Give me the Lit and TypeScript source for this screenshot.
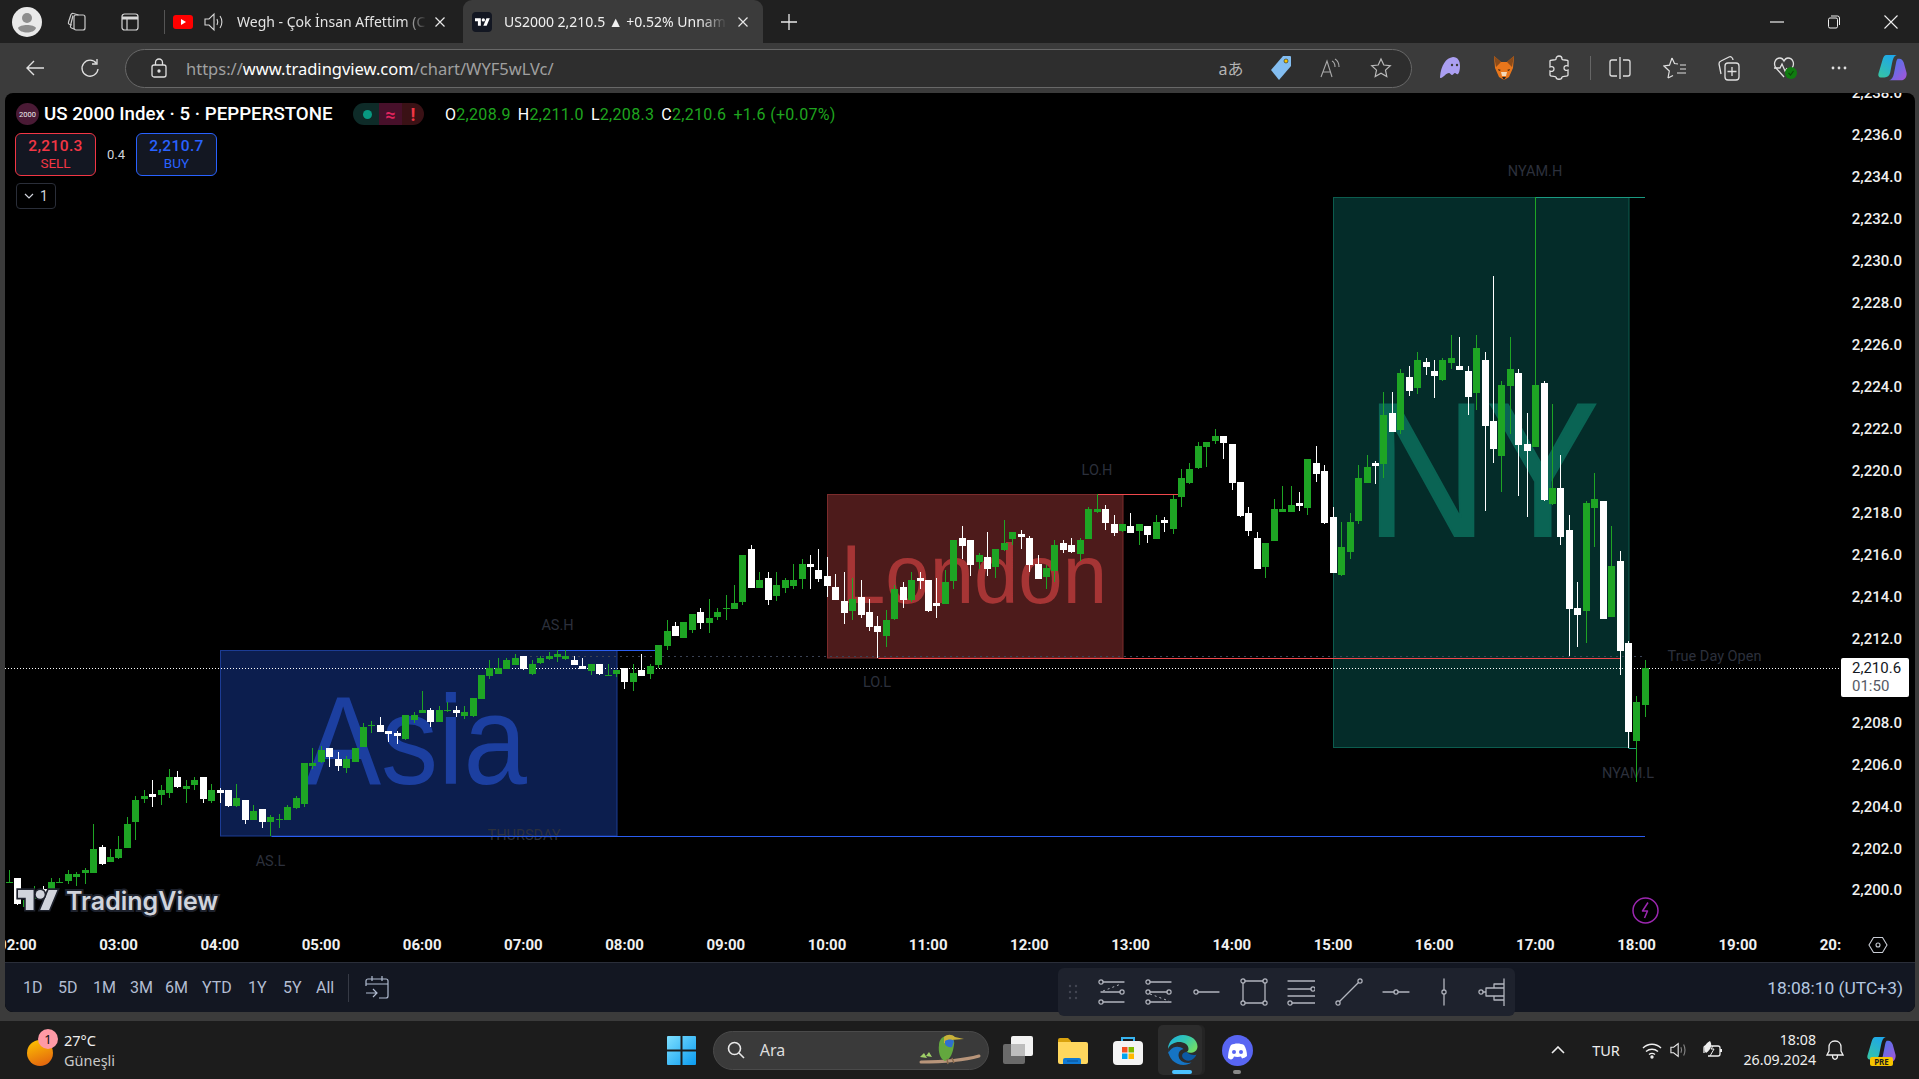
import { LitElement, html, css, svg } from 'lit';
import { customElement } from 'lit/decorators.js';

// ---------- chart data, all y values are page pixels ----------
// [white?, wick top, body top, body bottom, wick bottom]
type Candle = [number, number, number, number, number];
const G = 0;
const W = 1;
const candles: Candle[] = [
  [G,870,882,883,883],[W,878,878,904,905],[G,895,900,907,907],[G,886,892,899,902],[W,886,889,893,895],
  [G,878,882,889,889],[G,878,882,883,883],[G,870,874,881,884],[G,872,874,877,886],[G,868,870,873,884],
  [G,824,849,873,873],[W,845,847,864,865],[G,849,857,862,862],[G,836,849,858,859],[G,817,824,848,848],
  [G,796,800,822,840],[G,790,796,799,803],[W,780,794,797,807],[G,785,790,795,805],[G,769,777,793,798],
  [W,771,777,787,788],[G,780,786,789,803],[G,777,780,785,790],[W,777,777,799,803],[G,784,790,801,803],
  [W,788,790,793,803],[W,790,790,806,807],[G,784,798,806,807],[W,800,800,820,824],[G,805,811,820,820],
  [W,809,809,822,828],[G,815,817,822,836],[G,814,819,820,828],[G,805,807,820,820],[G,796,798,808,809],
  [G,763,763,804,807],[G,748,763,766,769],[G,746,750,762,763],[W,748,748,757,767],[W,752,759,766,771],
  [G,756,759,768,773],[G,748,748,762,762],[G,723,727,747,747],[G,721,725,726,733],[W,717,725,732,732],
  [W,731,731,734,742],[W,731,733,736,744],[G,715,715,739,740],[G,712,715,720,723],[G,691,710,713,713],
  [W,708,710,722,727],[G,706,710,722,722],[G,702,710,711,712],[W,706,710,713,717],[G,706,712,716,719],
  [G,698,698,716,717],[G,675,675,699,699],[G,660,668,676,679],[G,658,668,674,674],[G,658,660,669,669],
  [G,654,658,665,665],[W,656,656,669,670],[G,660,664,674,675],[G,656,658,663,664],[G,652,656,659,660],
  [G,650,654,657,662],[G,650,656,659,660],[W,656,660,665,665],[W,658,666,669,669],[G,664,664,671,675],
  [W,664,664,674,675],[G,664,675,676,676],[G,670,670,674,677],[W,668,668,682,689],[G,664,673,682,691],
  [W,654,670,676,676],[G,664,666,674,679],[G,645,645,665,668],[G,620,631,646,650],[W,622,626,636,636],
  [G,622,622,638,638],[G,614,614,630,633],[W,608,612,623,629],[G,599,618,623,633],[G,608,612,617,620],
  [G,595,608,609,620],[G,585,603,609,609],[G,555,555,602,605],[W,545,549,588,588],[G,572,580,588,588],
  [W,572,578,600,605],[G,572,585,596,601],[G,578,580,588,593],[G,564,580,586,589],[G,559,564,579,589],
  [W,555,564,567,589],[W,549,570,579,582],[W,557,576,586,597],[W,574,587,600,600],[W,572,601,613,624],
  [G,578,599,611,620],[W,580,597,615,618],[W,599,612,627,631],[W,616,626,632,658],[G,610,620,636,647],
  [G,585,589,619,620],[W,582,587,600,608],[G,572,580,600,602],[W,572,578,581,589],[W,580,580,611,612],
  [W,578,603,606,618],[G,570,582,604,604],[G,540,540,581,589],[W,526,538,546,559],[W,540,540,565,576],
  [G,553,555,562,569],[W,532,557,569,576],[G,549,549,567,578],[G,520,543,550,551],[G,532,532,539,545],
  [W,530,534,537,549],[W,536,538,565,572],[W,555,564,579,579],[G,565,568,577,589],[G,540,545,571,582],
  [W,540,543,550,553],[W,538,545,552,553],[G,538,540,554,561],[G,507,509,539,539],[G,494,509,512,513],
  [W,505,509,523,530],[W,515,524,533,536],[G,524,524,531,532],[W,513,526,533,533],[G,524,524,531,545],
  [W,526,526,535,543],[G,515,522,539,539],[W,517,520,523,532],[G,495,499,529,534],[G,469,478,497,507],
  [G,463,469,483,484],[G,442,446,468,469],[G,442,442,447,467],[G,429,436,441,444],[W,436,436,443,459],
  [W,444,444,483,490],[W,482,482,516,517],[W,507,513,531,536],[W,532,538,569,569],[G,543,543,567,578],
  [G,499,509,541,541],[G,486,509,512,512],[G,486,505,512,512],[W,492,503,506,511],[G,459,459,508,515],
  [W,446,463,474,482],[W,465,471,523,524],[W,507,517,573,573],[G,522,547,575,576],[G,513,522,552,559],
  [G,465,478,521,524],[G,455,467,483,483],[W,461,463,466,484],[G,392,415,464,478],[W,392,413,432,432],
  [G,369,373,430,434],[W,366,377,391,396],[G,352,360,388,394],[W,358,362,367,375],[W,360,371,376,398],
  [G,358,360,380,381],[G,335,358,363,369],[W,337,366,370,370],[W,366,371,397,415],[G,335,348,393,410],
  [W,352,360,426,511],[W,276,421,449,463],[G,381,385,456,492],[G,337,369,386,434],[W,369,373,445,496],
  [W,413,444,451,517],[G,197,385,447,447],[W,381,383,500,501],[G,404,488,504,505],[W,455,488,537,545],
  [W,515,530,609,656],[W,582,608,615,647],[G,501,503,611,643],[G,473,499,508,547],[W,501,501,619,619],
  [G,526,566,617,617],[W,551,561,651,675],[W,641,643,732,748],[G,696,702,741,782],[G,660,668,705,717],
];

const candleX = (i: number) => Math.round(9.3 + 8.433 * i - 3.5);
const priceY = (p: number) => 135.2 + (2236 - p) * 20.98;
const hourX = (h: number) => 118.6 + (h - 3) * 101.2;

const prices: number[] = [];
for (let p = 2238; p >= 2200; p -= 2) prices.push(p);
const hours: number[] = [];
for (let h = 2; h <= 20; h++) hours.push(h);

const sessions = [
  { cls: 'asia', x: 220, y: 650, w: 396.5, h: 185.5 },
  { cls: 'london', x: 827, y: 494, w: 295.5, h: 163.5 },
  { cls: 'ny', x: 1333, y: 197, w: 295.5, h: 550 },
];
const bigWords = [
  { cls: 'asia-word', t: 'Asia', x: 305, y: 784, size: 127, len: 222 },
  { cls: 'london-word', t: 'London', x: 841, y: 603, size: 84, len: 266 },
  { cls: 'ny-word', t: 'NY', x: 1366, y: 536, size: 191, len: 233 },
];
const levels = [
  { cls: 'blue', x1: 557, x2: 656, y: 650.5 },
  { cls: 'blue', x1: 271.5, x2: 1645, y: 836.5 },
  { cls: 'red', x1: 1097.5, x2: 1178, y: 494.5 },
  { cls: 'red', x1: 878.5, x2: 1620, y: 658.5 },
  { cls: 'teal', x1: 1535, x2: 1645, y: 197.5 },
  { cls: 'teal', x1: 1628.5, x2: 1636.5, y: 748.5 },
];
const tags = [
  { t: 'AS.H', x: 557.5, y: 625 },
  { t: 'AS.L', x: 270.5, y: 861 },
  { t: 'THURSDAY', x: 524, y: 835 },
  { t: 'LO.H', x: 1097, y: 470 },
  { t: 'LO.L', x: 877, y: 682 },
  { t: 'NYAM.H', x: 1535, y: 171 },
  { t: 'NYAM.L', x: 1628, y: 773 },
  { t: 'True Day Open', x: 1714.5, y: 656 },
];

// ---------- small drawings ----------
const ln = (p: string) => svg`<path d=${p} fill="none" stroke="currentColor" stroke-width="1.3" stroke-linecap="round" stroke-linejoin="round"></path>`;
const dot = (x: number, y: number) => svg`<circle cx=${x} cy=${y} r="2.1" fill="none" stroke="currentColor" stroke-width="1.2"></circle>`;
const drawIcons = [
  svg`${dot(4, 4)}${ln('M6 4h21')}${dot(25, 14)}${ln('M4 14h19')}${dot(4, 24)}${ln('M6 24h21')}<path d="M6 13L24 6" stroke="currentColor" stroke-dasharray="2 3" fill="none"></path>`,
  svg`${dot(4, 4)}${ln('M6 4h21')}${dot(4, 14)}${ln('M6 14h17')}${dot(25, 14)}${dot(4, 24)}${ln('M6 24h21')}<path d="M6 16L25 23" stroke="currentColor" stroke-dasharray="2 3" fill="none"></path>`,
  svg`${dot(4, 14)}${ln('M6 14h21')}`,
  svg`${dot(3, 3)}${dot(25, 3)}${dot(3, 25)}${dot(25, 25)}${ln('M5 3h18M5 25h18M3 5v18M25 5v18')}`,
  svg`${ln('M1 3h27M1 11h23M1 18h27')}${dot(26, 11)}${dot(3, 25)}${ln('M5 25h23')}`,
  svg`${dot(3, 25)}${dot(25, 3)}${ln('M4.5 23.5L23.5 4.5')}`,
  svg`${ln('M1 14h11M16 14h11')}${dot(14, 14)}`,
  svg`${ln('M14 1v11M14 16v11')}${dot(14, 14)}`,
  svg`${dot(3, 14)}${ln('M26 1v27M5 14h3M8 14v-4h8v-4h10M8 14v4h8v4h10M16 10h10M16 18h10')}`,
];

const iconWrap = (w: number, h: number, body: unknown) =>
  html`<svg width=${w} height=${h} viewBox="0 0 ${w} ${h}">${body}</svg>`;

const edgeLogo = (s: number) => html`<svg width=${s} height=${s} viewBox="0 0 32 32">
  <defs>
    <linearGradient id="eg" x1="0" y1="0" x2="1" y2="0.6"><stop offset="0" stop-color="#1bb0e8"></stop><stop offset="0.55" stop-color="#33c6b0"></stop><stop offset="1" stop-color="#6fdc6a"></stop></linearGradient>
  </defs>
  <path d="M16 1C7.5 1 1 7.5 1 15c2-5 7-7 11-7 5 0 9.5 2.5 9.5 7 0 1.500-.8 2.5-2 3 4 2 11 .5 11-5.5C30.5 6 24 1 16 1z" fill="url(#eg)"></path>
  <path d="M1 15c0 9 7 16 15.5 16 3 0 6-1 8-2.5-6 1.500-13-1-13-7.500 0-3 2-5.500 5-6-3-2.500-7-3-10-1.500C3.500 15 2 17 1 20z" fill="#1574c4"></path>
  <path d="M19.5 18c-4 .5-5 3-4 5.5 1.500 3 6 4 9 2.500 2-1 4-3 5-5.500-3 1.500-7 0-10-2.500z" fill="#0c59a4"></path>
</svg>`;

const copilotLogo = (s: number) => html`<svg width=${s} height=${s} viewBox="0 0 32 32">
  <defs>
    <linearGradient id="c1" x1="0" y1="1" x2="0.6" y2="0"><stop offset="0" stop-color="#37c6a0"></stop><stop offset="1" stop-color="#1fa8e8"></stop></linearGradient>
    <linearGradient id="c2" x1="0" y1="0" x2="1" y2="1"><stop offset="0" stop-color="#3f7df0"></stop><stop offset="1" stop-color="#a653d8"></stop></linearGradient>
  </defs>
  <path d="M10 2h11c-3 1-4 4-5 9l-2 10c-.7 3-3 5-6 5H4C2 26 1 24 1.5 22L6 7c.8-3 2-5 4-5z" fill="url(#c1)"></path>
  <path d="M22 6h2c2 0 3.5 1.5 4.5 4l3 11c.6 3-1 8-6 8H13c3-1 4-3 5-7l2-10c.5-3 1-5 2-6z" fill="url(#c2)"></path>
</svg>`;

// ---------- browser frame ----------
@customElement('browser-chrome')
class BrowserChrome extends LitElement {
  static styles = css`
    :host { display: block; color: #e4e4e4; font-family: "Noto Sans", "Open Sans", sans-serif; }
    .tabs { display: flex; align-items: center; height: 43px; background: #202020; padding-left: 7px; }
    .slot { display: flex; align-items: center; justify-content: center; flex: none; height: 100%; }
    .sep { width: 1px; height: 24px; background: #555; margin-left: 11px; flex: none; }
    .tab { display: flex; align-items: center; height: 100%; flex: none; font-size: 14px; position: relative; }
    .tab1 { width: 298px; padding-left: 8px; box-sizing: border-box; }
    .active { width: 300px; background: #3b3b3b; border-radius: 9px 9px 0 0; padding-left: 9px; box-sizing: border-box; }
    .tab-text { overflow: hidden; white-space: nowrap; -webkit-mask-image: linear-gradient(90deg, #000 88%, transparent); mask-image: linear-gradient(90deg, #000 88%, transparent); }
    .tab1 .tab-text { width: 190px; margin-left: 12px; }
    .active .tab-text { width: 223px; margin-left: 12px; color: #f0f0f0; }
    .close { margin-left: 8px; flex: none; display: flex; }
    .fav { width: 20px; height: 20px; background: #131722; border-radius: 4px; display: flex; align-items: center; justify-content: center; flex: none; }
    .grow { flex: 1; }
    .bar { display: flex; align-items: center; height: 50px; background: #3b3b3b; padding-left: 7px; box-sizing: border-box; }
    .pill { display: flex; align-items: center; width: 1287px; height: 39px; margin-left: 8px; background: #2e2e2e; border: 1px solid #686868; border-radius: 20px; box-sizing: border-box; flex: none; }
    .url { font-size: 16.5px; color: #a0a0a0; white-space: nowrap; }
    .url b { font-weight: 400; color: #fff; }
    .translate { font-family: "Noto Sans", "Noto Sans CJK JP", sans-serif; font-size: 16px; color: #b4b4b4; white-space: nowrap; }
    .bar-sep { width: 1px; height: 24px; background: #666; margin-left: 3px; flex: none; }
    svg { display: block; }
  `;

  render() {
    const cross = html`<svg width="10" height="10" viewBox="0 0 10 10"><path d="M.5.5l9 9M9.5.5l-9 9" stroke="#e8e8e8" stroke-width="1.2"></path></svg>`;
    return html`
      <div class="tabs">
        <div class="slot" style="width:40px">
          <svg width="30" height="30" viewBox="0 0 30 30">
            <circle cx="15" cy="15" r="15" fill="#e9e9e9"></circle>
            <circle cx="15" cy="11" r="5" fill="#8d8d8d"></circle>
            <path d="M6 21c2-4 16-4 18 0-2 6-16 6-18 0z" fill="#8d8d8d"></path>
          </svg>
        </div>
        <div class="slot" style="width:60px">
          <svg width="22" height="22" viewBox="0 0 22 22" fill="none" stroke="#ccc" stroke-width="1.2">
            <rect x="8" y="4" width="11" height="15" rx="2"></rect>
            <path d="M8 18 5.5 17a2 2 0 0 1-1-2.5L7 4.5M6 14 3.5 13.5a2 2 0 0 1-1-2.5L5 3.5a2 2 0 0 1 2.5-1l5 1.5"></path>
          </svg>
        </div>
        <div class="slot" style="width:46px">
          <svg width="20" height="20" viewBox="0 0 20 20" fill="none" stroke="#d8d8d8" stroke-width="1.2">
            <rect x="2" y="2" width="16" height="16" rx="2.5"></rect>
            <path d="M2 6h16" stroke-width="3"></path><path d="M7 6v12"></path>
          </svg>
        </div>
        <div class="sep"></div>
        <div class="tab tab1">
          <svg width="20" height="14" viewBox="0 0 20 14"><rect width="20" height="14" rx="3" fill="#f00"></rect><path d="M8 4l5 3-5 3z" fill="#fff"></path></svg>
          <div class="slot" style="width:24px;margin-left:9px">
            <svg width="22" height="22" viewBox="0 0 22 22" fill="none" stroke="#d8d8d8" stroke-width="1.1"><path d="M2 8h4l5-5v16l-5-5H2z"></path><path d="M14 8c1 2 1 4 0 6M17 5c2.5 3.5 2.5 8.5 0 12"></path></svg>
          </div>
          <div class="tab-text" style="width:190px;margin-left:11px">Wegh - Çok İnsan Affettim (C</div>
          <div class="close">${cross}</div>
        </div>
        <div class="tab active">
          <div class="fav">
            <svg width="15" height="8" viewBox="0 0 36 18"><path d="M14 18H7V7H0V0h14v18zM28 18h-8L27.5 0h8L28 18z" fill="#fff"></path><circle cx="20" cy="4" r="4" fill="#fff"></circle></svg>
          </div>
          <div class="tab-text">US2000 2,210.5 ▲ +0.52% Unnam</div>
          <div class="close" style="margin-left:11px">${cross}</div>
        </div>
        <div class="slot" style="width:52px">
          <svg width="16" height="16" viewBox="0 0 16 16"><path d="M8 0v16M0 8h16" stroke="#e8e8e8" stroke-width="1.3"></path></svg>
        </div>
        <div class="grow"></div>
        <div class="slot" style="width:57px"><svg width="14" height="2" viewBox="0 0 14 2"><path d="M0 1h14" stroke="#eee" stroke-width="1.2"></path></svg></div>
        <div class="slot" style="width:57px">
          <svg width="14" height="14" viewBox="0 0 14 14" fill="none" stroke="#eee"><rect x="1.5" y="3" width="9" height="10" rx="1.5"></rect><path d="M4 1h6.5a2 2 0 0 1 2 2v7"></path></svg>
        </div>
        <div class="slot" style="width:57px"><svg width="14" height="14" viewBox="0 0 14 14"><path d="M.5.5l13 13M13.5.5l-13 13" stroke="#eee" stroke-width="1.1"></path></svg></div>
      </div>
      <div class="bar">
        <div class="slot" style="width:56px">
          <svg width="20" height="18" viewBox="0 0 20 18" fill="none" stroke="#e0e0e0" stroke-width="1.4"><path d="M19 9H2M9 2 2 9l7 7"></path></svg>
        </div>
        <div class="slot" style="width:54px">
          <svg width="20" height="20" viewBox="0 0 20 20" fill="none" stroke="#e0e0e0" stroke-width="1.3"><path d="M16.5 5.5A8 8 0 1 0 18 11"></path><path d="M17 1v5h-5"></path></svg>
        </div>
        <div class="pill">
          <div class="slot" style="width:60px;padding-left:5px;box-sizing:border-box">
            <svg width="16" height="20" viewBox="0 0 16 20" fill="none" stroke="#e0e0e0" stroke-width="1.3"><rect x="1" y="7" width="14" height="12" rx="2"></rect><path d="M4.5 7V4.5a3.5 3.5 0 0 1 7 0V7"></path><circle cx="8" cy="13" r="1" fill="#e0e0e0"></circle></svg>
          </div>
          <div class="url">https://<b>www.tradingview.com</b>/chart/WYF5wLVc/</div>
          <div class="grow"></div>
          <div class="slot translate" style="width:50px">aあ</div>
          <div class="slot" style="width:50px">
            <svg width="22" height="26" viewBox="0 0 22 26"><path d="M13 1h7a1 1 0 0 1 1 1v9L9 25 1 15z" fill="#83bdf0"></path><circle cx="16" cy="6" r="2" fill="#f6c400" stroke="#222" stroke-width=".6"></circle></svg>
          </div>
          <div class="slot" style="width:50px">
            <svg width="22" height="20" viewBox="0 0 22 20" fill="none" stroke="#aaa" stroke-width="1.1"><path d="M1 19 7 3l5 16M3 14h8"></path><path d="M12 3c2 1 3 3 3 6M15 1c2.5 1.5 4 4 4 8"></path></svg>
          </div>
          <div class="slot" style="width:50px;margin-right:5px">
            <svg width="22" height="22" viewBox="0 0 22 22" fill="none" stroke="#bbb" stroke-width="1.2"><path d="M11 2l2.8 6 6.5.7-4.800 4.400 1.300 6.400L11 16.300 5.200 19.500l1.300-6.400L1.700 8.700 8.200 8z"></path></svg>
          </div>
        </div>
        <div class="slot" style="width:54px;margin-left:11px">
          <svg width="22" height="24" viewBox="0 0 22 24"><path d="M1 21C2 9 7 2 14 1c5 0 7 4 7 9 0 4-1 7-2 8-1 1-2-1-3-1-1 0-2 2-3 2s-2-2-3-2c-3 0-5 4-8 5-1 0-1-.5-1-1z" fill="#ab9ff2"></path><circle cx="13" cy="9" r="1.2" fill="#3b3b3b"></circle><circle cx="18" cy="9" r="1.2" fill="#3b3b3b"></circle></svg>
        </div>
        <div class="slot" style="width:54px">
          <svg width="24" height="26" viewBox="0 0 24 26"><path d="M2 1l7 6h6l7-6-1 12-4 9-5 3-5-3-4-9z" fill="#e8761b"></path><path d="M2 1l7 6-5 5zM22 1l-7 6 5 5z" fill="#8a4b1a"></path><path d="M10 22h4l-2 3z" fill="#222"></path><path d="M6 14l3 1-2 1zM18 14l-3 1 2 1z" fill="#3a2410"></path><path d="M9 17h6l-1 4h-4z" fill="#f4d9b8"></path></svg>
        </div>
        <div class="slot" style="width:56px">
          <svg width="22" height="26" viewBox="0 0 22 26" fill="none" stroke="#e0e0e0" stroke-width="1.3"><path d="M8 4c0-4 6-4 6 0 0 2 6 0 6 2v5c-2-1-4 0-4 2s2 3 4 2v5c0 2-6 1-6 2 0 3-6 3-6 0 0-1-6 0-6-2v-4c2 1 4 0 4-2s-2-3-4-2V6c0-2 6 0 6-2z"></path></svg>
        </div>
        <div class="bar-sep"></div>
        <div class="slot" style="width:57px">
          <svg width="22" height="24" viewBox="0 0 22 24" fill="none" stroke="#e0e0e0" stroke-width="1.3"><path d="M11 1v22"></path><path d="M8 4H3a2 2 0 0 0-2 2v12a2 2 0 0 0 2 2h5M14 4h5a2 2 0 0 1 2 2v12a2 2 0 0 1-2 2h-5"></path></svg>
        </div>
        <div class="slot" style="width:54px">
          <svg width="24" height="22" viewBox="0 0 24 22" fill="none" stroke="#e0e0e0" stroke-width="1.2"><path d="M9 1l2.5 5.500 3.500.5M5 21l1.300-7L1 9l5.500-.8L9 1M5 21l5-2.500M17 8h6M17 12h6M14 16h9"></path></svg>
        </div>
        <div class="slot" style="width:54px;margin-right:6px">
          <svg width="24" height="26" viewBox="0 0 24 26" fill="none" stroke="#e0e0e0" stroke-width="1.3"><rect x="8" y="8" width="14" height="17" rx="3"></rect><path d="M15 12v9M10.5 16.5h9"></path><path d="M4 19 2 9a3 3 0 0 1 2-3l8-4c2-1 4 1 4 3"></path></svg>
        </div>
        <div class="slot" style="width:48px">
          <svg width="26" height="26" viewBox="0 0 26 26"><path d="M11 22 3 13C0 9 2 3 7 3c2 0 3 1 4 3 1-2 2-3 4-3 5 0 7 6 4 10" fill="none" stroke="#e0e0e0" stroke-width="1.3"></path><path d="M1 13h6l2-4 3 7 2-3" fill="none" stroke="#e0e0e0" stroke-width="1.3"></path><circle cx="18" cy="18" r="6" fill="#107c10"></circle><path d="M15.5 18l2 2 3-4" stroke="#0b4a0b" fill="none" stroke-width="1.2"></path></svg>
        </div>
        <div class="slot" style="width:57px">
          <svg width="16" height="4" viewBox="0 0 16 4" fill="#e0e0e0"><circle cx="2" cy="2" r="1.4"></circle><circle cx="8" cy="2" r="1.4"></circle><circle cx="14" cy="2" r="1.4"></circle></svg>
        </div>
        <div class="slot" style="width:50px">${copilotLogo(30)}</div>
      </div>
    `;
  }
}

// ---------- chart ----------
@customElement('tv-chart')
class TvChart extends LitElement {
  static styles = css`
    :host { display: block; position: relative; height: 919px; background: #000; border-radius: 8px; overflow: hidden; }
    .canvas { display: block; width: 1910px; height: 869px; font-family: Roboto, "Liberation Sans", sans-serif; }
    .box { stroke-width: 1; }
    .box.asia { fill: #0c1e4e; stroke: #1c3c94; }
    .box.london { fill: #4d1b1b; stroke: #7c2c2c; }
    .box.ny { fill: #042c29; stroke: #0c5c4e; }
    .word { font-family: "Liberation Sans", Arial, sans-serif; }
    .asia-word { fill: #1c3fa0; }
    .london-word { fill: #a63535; }
    .ny-word { fill: #0a6454; stroke: #0a6454; stroke-width: 2px; }
    .lvl { stroke-width: 1; }
    .lvl.blue { stroke: #2a5df0; }
    .lvl.red { stroke: #f0484c; }
    .lvl.teal { stroke: #1a9a82; }
    .tag { fill: #2c303c; font-size: 14.5px; text-anchor: middle; dominant-baseline: central; }
    .open-line { stroke: #3a4254; stroke-dasharray: 2 4; }
    .last-line { stroke: #fff; stroke-dasharray: 1 2; }
    .bull { fill: #1ea524; }
    .bear { fill: #fff; }
    .axis { fill: #f0f0f0; font-size: 15px; font-weight: 500; dominant-baseline: central; }
    .pr { text-anchor: end; }
    .tm { text-anchor: middle; font-weight: 700; }
    .last-box { fill: #fff; }
    .last-price { fill: #131722; font-size: 15px; dominant-baseline: central; }
    .last-time { fill: #555a66; font-size: 15px; dominant-baseline: central; }
    .wm-mark { fill: #d1d4dc; stroke: #1e222d; stroke-width: 3px; paint-order: stroke; }
    .wm-text { fill: #d1d4dc; stroke: #1e222d; stroke-width: 4px; paint-order: stroke; font-family: Inter, Lato, sans-serif; font-size: 25px; font-weight: 600; }
    .legend { position: absolute; left: 10px; top: 10px; display: flex; flex-direction: column; align-items: flex-start; font-family: Roboto, "Liberation Sans", sans-serif; color: #fff; }
    .title-row { display: flex; align-items: center; height: 22px; }
    .sym { width: 23px; height: 22px; border-radius: 50%; background: #4a1a35; color: #eee; font-size: 7.5px; display: flex; align-items: center; justify-content: center; flex: none; margin-left: 1px; }
    .title { margin-left: 5px; font-size: 18.7px; font-weight: 500; white-space: nowrap; width: 309px; flex: none; }
    .pills { display: flex; height: 22px; width: 71px; border-radius: 11px; overflow: hidden; flex: none; font-size: 18px; }
    .pills span { display: flex; align-items: center; justify-content: center; }
    .p1 { background: #0e2b28; width: 26px; }
    .p1 i { width: 9px; height: 9px; border-radius: 50%; background: #089981; display: block; margin-left: 2px; }
    .p2 { background: #47102a; width: 23px; color: #e0245e; font-weight: 700; }
    .p3 { background: #3a1115; width: 22px; color: #f23645; font-weight: 700; }
    .ohlc { display: flex; margin-left: 21px; font-size: 16px; letter-spacing: .3px; white-space: nowrap; }
    .ohlc span { color: #1fa51f; }
    .ohlc b { font-weight: 400; color: #fff; }
    .ohlc .cell { margin-right: 7px; }
    .trade { display: flex; align-items: center; margin-top: 8px; }
    .tbtn { width: 81px; height: 43px; box-sizing: border-box; border-radius: 6px; border: 1px solid; background: #131722; display: flex; flex-direction: column; align-items: center; justify-content: center; line-height: 17px; font-size: 13.5px; }
    .tbtn b { font-size: 15.5px; font-weight: 500; letter-spacing: .4px; }
    .sell { color: #f23645; border-color: #f23645; }
    .buy { color: #2962ff; border-color: #2962ff; }
    .spread { width: 40px; text-align: center; font-size: 13px; color: #d1d4dc; }
    .count { margin-top: 7px; margin-left: 1px; width: 40px; height: 26px; box-sizing: border-box; border: 1px solid #2a2e39; border-radius: 4px; display: flex; align-items: center; justify-content: center; gap: 6px; font-size: 14px; color: #d1d4dc; }
    .bottom { display: flex; align-items: center; height: 50px; box-sizing: border-box; border-top: 1px solid #2a2e39; background: #131722; font-family: Roboto, "Liberation Sans", sans-serif; padding-left: 18px; padding-right: 12px; color: #b2bdd2; font-size: 16px; }
    .range { display: flex; }
    .range span { flex: none; }
    .vsep { width: 1px; height: 28px; background: #363a45; margin-left: 14px; flex: none; }
    .cal { margin-left: 16px; display: flex; }
    .clock { margin-left: auto; color: #b4c8e0; font-size: 17.4px; }
  `;

  render() {
    const s = svg;
    return html`
      <svg class="canvas" viewBox="5 93 1910 869">
        <defs><clipPath id="time-clip"><rect x="5" y="920" width="1836" height="42"></rect></clipPath></defs>
        ${sessions.map((b) => s`<rect class="box ${b.cls}" x=${b.x + 0.5} y=${b.y + 0.5} width=${b.w} height=${b.h}></rect>`)}
        ${bigWords.map((w) => s`<text class="word ${w.cls}" x=${w.x} y=${w.y} font-size=${w.size} textLength=${w.len} lengthAdjust="spacingAndGlyphs">${w.t}</text>`)}
        ${tags.map((t) => s`<text class="tag" x=${t.x} y=${t.y}>${t.t}</text>`)}
        ${levels.map((l) => s`<line class="lvl ${l.cls}" x1=${l.x1} x2=${l.x2} y1=${l.y} y2=${l.y}></line>`)}
        <line class="open-line" x1="530" x2="1643" y1="656.5" y2="656.5"></line>
        <line class="last-line" x1="5" x2="1841" y1="668.5" y2="668.5"></line>
        ${candles.map((c, i) => {
          const x = candleX(i);
          const cls = c[0] === W ? 'bear' : 'bull';
          return s`<rect class=${cls} x=${x + 3} y=${c[1]} width="1" height=${c[4] - c[1]}></rect>
            <rect class=${cls} x=${x} y=${c[2]} width="7" height=${c[3] - c[2]}></rect>`;
        })}
        <g transform="translate(18 885.5) scale(1.11)">
          <path class="wm-mark" d="M14 22H7V11H0V4h14v18zM28 22h-8l7.5-18h8L28 22z"></path>
          <circle class="wm-mark" cx="20" cy="8" r="4"></circle>
        </g>
        <text class="wm-text" x="66" y="910">TradingView</text>
        <g fill="none" stroke="#9c27b0" stroke-width="1.5">
          <circle cx="1645.5" cy="910.5" r="12.5"></circle>
          <path d="M1648 902.5l-5.5 8.500h5l-3 7" stroke-linejoin="round"></path>
        </g>
        ${prices.map((p) => s`<text class="axis pr" x="1902" y=${priceY(p)}>${p.toLocaleString('en-US', { minimumFractionDigits: 1 })}</text>`)}
        <g clip-path="url(#time-clip)">
          ${hours.map((h) => s`<text class="axis tm" x=${hourX(h)} y="945">${String(h).padStart(2, '0')}:00</text>`)}
        </g>
        <g fill="none" stroke="#c8ccd4" stroke-width="1.1">
          <path d="M1873.5 937.5h9l4.5 7.500-4.500 7.500h-9l-4.500-7.500z"></path>
          <circle cx="1878" cy="945" r="2"></circle>
        </g>
        <rect class="last-box" x="1841" y="658" width="68" height="39" rx="2"></rect>
        <text class="last-price" x="1852" y="668">2,210.6</text>
        <text class="last-time" x="1852" y="686">01:50</text>
      </svg>
      <div class="legend">
        <div class="title-row">
          <div class="sym">2000</div>
          <div class="title">US 2000 Index · 5 · PEPPERSTONE</div>
          <div class="pills">
            <span class="p1"><i></i></span><span class="p2">≈</span><span class="p3">!</span>
          </div>
          <div class="ohlc">
            <div class="cell"><b>O</b><span>2,208.9</span></div>
            <div class="cell"><b>H</b><span>2,211.0</span></div>
            <div class="cell"><b>L</b><span>2,208.3</span></div>
            <div class="cell"><b>C</b><span>2,210.6</span></div>
            <span>+1.6 (+0.07%)</span>
          </div>
        </div>
        <div class="trade">
          <div class="tbtn sell"><b>2,210.3</b>SELL</div>
          <div class="spread">0.4</div>
          <div class="tbtn buy"><b>2,210.7</b>BUY</div>
        </div>
        <div class="count">
          <svg width="10" height="6" viewBox="0 0 10 6" fill="none" stroke="#d1d4dc" stroke-width="1.2"><path d="M1 1l4 4 4-4"></path></svg>
          <span>1</span>
        </div>
      </div>
      <div class="bottom">
        <div class="range">
          <span style="width:35px">1D</span><span style="width:35px">5D</span><span style="width:37px">1M</span>
          <span style="width:35px">3M</span><span style="width:37px">6M</span><span style="width:46px">YTD</span>
          <span style="width:35px">1Y</span><span style="width:33px">5Y</span><span>All</span>
        </div>
        <div class="vsep"></div>
        <div class="cal">
          <svg width="24" height="23" viewBox="0 0 24 23" fill="none" stroke="#b2bdd2" stroke-width="1.2">
            <path d="M1 10V5a2 2 0 0 1 2-2h18a2 2 0 0 1 2 2v15a2 2 0 0 1-2 2h-7M1 8h22M7 0v5M17 0v5M1 17h11M8 13l4 4-4 4"></path>
          </svg>
        </div>
        <div class="clock">18:08:10 (UTC+3)</div>
      </div>
    `;
  }
}

// ---------- windows taskbar ----------
@customElement('win-taskbar')
class WinTaskbar extends LitElement {
  static styles = css`
    :host { display: flex; align-items: center; height: 58px; background: #1c1c1c; color: #eee; font-family: "Noto Sans", "Open Sans", sans-serif; font-size: 14px; }
    .side { flex: 1; display: flex; align-items: center; height: 100%; }
    .end { justify-content: flex-end; padding-right: 11px; }
    .mid { display: flex; align-items: center; height: 100%; flex: none; margin-left: 10px; }
    .slot { display: flex; align-items: center; justify-content: center; flex: none; height: 100%; position: relative; }
    .weather { position: relative; width: 40px; height: 40px; margin-left: 24px; flex: none; }
    .sun { position: absolute; left: 3px; top: 10px; width: 26px; height: 26px; border-radius: 50%; background: linear-gradient(160deg, #ffc800, #e05a10); }
    .badge { position: absolute; left: 14px; top: -1px; width: 20px; height: 20px; border-radius: 50%; background: #ff9aa6; color: #111; font-size: 13px; display: flex; align-items: center; justify-content: center; }
    .wtext { line-height: 20px; font-size: 14.5px; }
    .dim { color: #c8c8c8; }
    .search { width: 276px; height: 39px; margin-left: 3px; border-radius: 20px; background: #3a3a3a; border: 1px solid #4a4a4a; box-sizing: border-box; display: flex; align-items: center; flex: none; overflow: hidden; color: #ddd; font-size: 16px; }
    .search svg.glass { margin-left: 13px; margin-right: 15px; flex: none; }
    .bird { margin-left: auto; margin-right: 5px; flex: none; }
    .tile { position: absolute; left: 3px; top: 4px; width: 44px; height: 50px; background: #2c2c2c; border-radius: 5px; box-shadow: 3px 0 0 #242424; }
    .run { position: absolute; left: 17px; top: 49px; width: 20px; height: 4px; border-radius: 2px; background: #4cc2ff; }
    .idle { position: absolute; left: 23px; top: 49px; width: 8px; height: 4px; border-radius: 2px; background: #888; }
    .up { position: relative; display: flex; }
    .clock { width: 82px; text-align: right; line-height: 20px; font-size: 14.2px; flex: none; }
    .pre { position: absolute; left: 16px; top: 36px; width: 23px; height: 9px; border-radius: 2px; background: #f6c400; color: #1c1c1c; font-size: 8px; line-height: 9px; font-weight: 700; text-align: center; }
    svg { display: block; }
  `;

  render() {
    return html`
      <div class="side">
        <div class="weather"><div class="sun"></div><div class="badge">1</div></div>
        <div class="wtext"><div>27°C</div><div class="dim">Güneşli</div></div>
      </div>
      <div class="mid">
        <div class="slot" style="width:57px">
          <svg width="29" height="29" viewBox="0 0 29 29">
            <defs><linearGradient id="wn" x1="0" y1="0" x2="1" y2="1"><stop offset="0" stop-color="#7fe0ff"></stop><stop offset="1" stop-color="#0a9bf0"></stop></linearGradient></defs>
            <path d="M0 1a1 1 0 0 1 1-1h12.5v13.5H0zM15.5 0H28a1 1 0 0 1 1 1v12.5H15.500zM0 15.5h13.5V29H1a1 1 0 0 1-1-1zM15.5 15.5H29V28a1 1 0 0 1-1 1H15.500z" fill="url(#wn)"></path>
          </svg>
        </div>
        <div class="search">
          <svg class="glass" width="18" height="18" viewBox="0 0 18 18" fill="none" stroke="#e8e8e8" stroke-width="1.6"><circle cx="7.5" cy="7.5" r="6"></circle><path d="M12 12l5 5"></path></svg>
          <span>Ara</span>
          <svg class="bird" width="64" height="34" viewBox="0 0 64 34">
            <path d="M2 29c14 0 40-1 58-6" stroke="#b8957a" stroke-width="3" fill="none" stroke-linecap="round"></path>
            <path d="M1 24l4-4 3 5zM7 23l3-4 3 5z" fill="#9fd067"></path>
            <path d="M20 12c0-6 5-10 10-9 4 1 6 5 5 9-1 7-3 14-9 16-5-2-7-9-6-16z" fill="#63a83e"></path>
            <path d="M25 4c3-3 8-3 11 0l9 2-13 1c-2 3-5 4-7 3z" fill="#c9b23a"></path>
            <path d="M26 8c3-2 7-2 9 0l-2 6c-3 1-6-1-7-3z" fill="#2f6fd0"></path>
            <path d="M28 26l1 5M33 25l2 5" stroke="#8a6a4c" stroke-width="1.5"></path>
          </svg>
        </div>
        <div class="slot" style="width:55px;margin-left:1.5px">
          <svg width="30" height="28" viewBox="0 0 30 28"><rect y="8" width="22" height="20" rx="2" fill="#6a6a6a"></rect><rect x="8" width="22" height="20" rx="2" fill="#f2f2f2"></rect><rect x="8" y="8" width="14" height="12" fill="#bdbdbd"></rect></svg>
        </div>
        <div class="slot" style="width:55px">
          <svg width="30" height="27" viewBox="0 0 30 27"><path d="M0 3a2 2 0 0 1 2-2h8l3 3v2H0z" fill="#d9a20e"></path><path d="M0 5h28a2 2 0 0 1 2 2v18a2 2 0 0 1-2 2H2a2 2 0 0 1-2-2z" fill="#ffd75e"></path><path d="M5 27v-4a2 2 0 0 1 2-2h14a2 2 0 0 1 2 2v4z" fill="#0f79d4"></path><path d="M9 24h11" stroke="#0a4f90"></path></svg>
        </div>
        <div class="slot" style="width:55px">
          <svg width="30" height="29" viewBox="0 0 30 29"><path d="M9 6V2h12v4" fill="none" stroke="#37b4f0" stroke-width="2"></path><rect y="5" width="30" height="24" rx="4" fill="#f4f4f4"></rect><rect x="9" y="11" width="5.5" height="5.5" fill="#f25022"></rect><rect x="15.5" y="11" width="5.5" height="5.5" fill="#7fba00"></rect><rect x="9" y="17.5" width="5.5" height="5.5" fill="#00a4ef"></rect><rect x="15.5" y="17.5" width="5.5" height="5.5" fill="#ffb900"></rect></svg>
        </div>
        <div class="slot" style="width:55px"><div class="tile"></div><div class="up">${edgeLogo(32)}</div><div class="run"></div></div>
        <div class="slot" style="width:55px">
          <svg width="31" height="31" viewBox="0 0 31 31"><circle cx="15.5" cy="15.5" r="15.5" fill="#5865f2"></circle><path d="M9 10c4-2 9-2 13 0 2 3 3 7 3 11-2 1.500-3 2-5 2.500l-1-2c-2 .6-5 .6-7 0l-1 2C9 25 8 24.500 6 23c0-4 1-10 3-13z" fill="#fff"></path><circle cx="12" cy="17" r="2" fill="#5865f2"></circle><circle cx="19" cy="17" r="2" fill="#5865f2"></circle></svg>
          <div class="idle"></div>
        </div>
      </div>
      <div class="side end">
        <div class="slot" style="width:48px"><svg width="14" height="8" viewBox="0 0 14 8" fill="none" stroke="#eee" stroke-width="1.6"><path d="M1 7l6-6 6 6"></path></svg></div>
        <div class="slot" style="width:48px;font-size:14.5px">TUR</div>
        <div class="slot" style="width:36px;margin-left:4px">
          <svg width="20" height="17" viewBox="0 0 20 17" fill="none" stroke="#eee" stroke-width="1.4"><path d="M1 6c5-5 13-5 18 0M4 9.500c3.500-3 8.500-3 12 0M7 12.500c2-1.500 4-1.500 6 0"></path><circle cx="10" cy="15" r="1" fill="#eee"></circle></svg>
        </div>
        <div class="slot" style="width:20px">
          <svg width="22" height="20" viewBox="0 0 22 20" fill="none" stroke="#eee" stroke-width="1.2"><path d="M1 7h3l5-4v14l-5-4H1z"></path><path d="M12 7c1 2 1 4 0 6M15 4c2 4 2 8 0 12" stroke="#888"></path></svg>
        </div>
        <div class="slot" style="width:44px">
          <svg width="22" height="20" viewBox="0 0 22 20"><path d="M3 13V8a2 2 0 0 1 2-2h12a2 2 0 0 1 2 2v6a2 2 0 0 1-2 2H7" fill="none" stroke="#eee" stroke-width="1.3"></path><path d="M19 9h2v3h-2" fill="#eee"></path><path d="M9 1c2 3 2 8-4 12-3-3-2-9 4-12z" fill="#eee"></path><path d="M9 16l4-7h-3l2-3" stroke="#eee" fill="none"></path></svg>
        </div>
        <div class="clock"><div>18:08</div><div>26.09.2024</div></div>
        <div class="slot" style="width:38px">
          <svg width="18" height="21" viewBox="0 0 18 21" fill="none" stroke="#eee" stroke-width="1.3"><path d="M9 1c-4 0-6 3-6 6v4l-2 4h16l-2-4V7c0-3-2-6-6-6zM6.5 15.5c0 5 5 5 5 0"></path></svg>
        </div>
        <div class="slot" style="width:54px">
          ${copilotLogo(30)}
          <div class="pre">PRE</div>
        </div>
      </div>
    `;
  }
}

@customElement('app-root')
class AppRoot extends LitElement {
  static styles = css`
    :host { display: block; width: 1919px; height: 1079px; overflow: hidden; background: #3b3b3b; }
    .main { position: relative; height: 928px; padding: 0 4px 9px 5px; box-sizing: border-box; }
    .favs { position: absolute; left: 1058px; top: 875px; width: 457px; height: 48px; background: #1e222d; border-radius: 6px; display: flex; align-items: center; color: #b2b5be; }
    .grip { width: 28px; margin-left: 1px; flex: none; display: flex; justify-content: center; }
    .draw { width: 47.6px; display: flex; justify-content: center; flex: none; }
    svg { display: block; }
  `;

  render() {
    return html`
      <browser-chrome></browser-chrome>
      <div class="main">
        <tv-chart></tv-chart>
        <div class="favs">
          <div class="grip">
            <svg width="10" height="16" viewBox="0 0 10 16" fill="#434651"><circle cx="2" cy="2" r="1.2"></circle><circle cx="8" cy="2" r="1.2"></circle><circle cx="2" cy="8" r="1.2"></circle><circle cx="8" cy="8" r="1.2"></circle><circle cx="2" cy="14" r="1.2"></circle><circle cx="8" cy="14" r="1.2"></circle></svg>
          </div>
          ${drawIcons.map((d) => html`<div class="draw">${iconWrap(28, 28, d)}</div>`)}
        </div>
      </div>
      <win-taskbar></win-taskbar>
    `;
  }
}
